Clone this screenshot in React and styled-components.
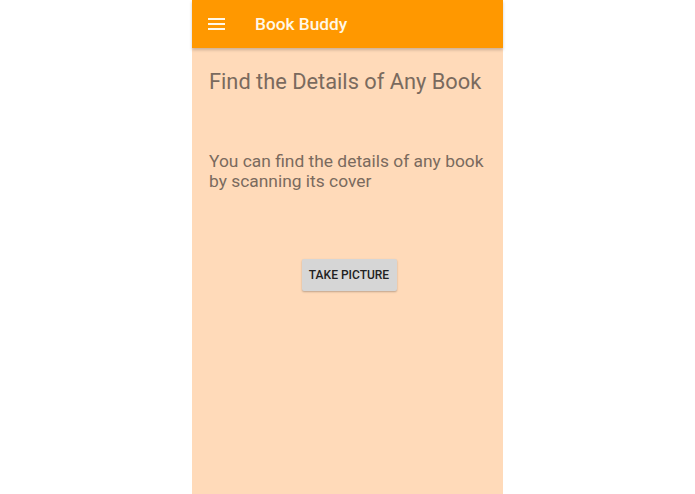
import React from "react";
import styled, { createGlobalStyle } from "styled-components";

const Global = createGlobalStyle`
  html, body { margin: 0; padding: 0; background: #ffffff; }
  body { font-family: Roboto, "Noto Sans", Arial, sans-serif; }
`;

const Page = styled.div`
  display: flex;
  justify-content: center;
  width: 695px;
  height: 494px;
`;

const Phone = styled.div`
  width: 311px;
  height: 494px;
  background: #ffdab9;
  display: flex;
  flex-direction: column;
`;

const AppBar = styled.header`
  height: 48px;
  background: #ff9800;
  display: flex;
  align-items: center;
  box-shadow: 0 2px 3px rgba(0, 0, 0, 0.2);
  position: relative;
  z-index: 1;
`;

const MenuButton = styled.div`
  width: 63px;
  padding-left: 16px;
  box-sizing: border-box;
  display: flex;
  align-items: center;
`;

const Title = styled.div`
  color: #fff8e8;
  font-size: 17.3px;
  font-weight: 500;
`;

const Content = styled.main`
  display: flex;
  flex-direction: column;
  padding: 21px 17px 0 17px;
`;

const Heading = styled.h1`
  margin: 0;
  font-size: 21.8px;
  font-weight: 400;
  color: #7a6a5e;
  line-height: 26px;
`;

const Paragraph = styled.p`
  margin: 56px 0 0 0;
  font-size: 17.4px;
  line-height: 20px;
  color: #7a6a5e;
`;

const ButtonRow = styled.div`
  display: flex;
  justify-content: center;
  margin-top: 68px;
  padding-left: 3px;
`;

const Button = styled.button`
  width: 95px;
  height: 32px;
  border: none;
  border-radius: 2px;
  background: #d6d6d6;
  color: #222222;
  font-family: Roboto, Arial, sans-serif;
  font-size: 12px;
  font-weight: 500;
  padding: 0;
  box-shadow: 0 1px 2px rgba(0, 0, 0, 0.25);
`;

export default function App() {
  return (
    <>
      <Global />
      <Page>
        <Phone>
          <AppBar>
            <MenuButton>
              <svg width="17" height="14" viewBox="0 0 17 14">
                <rect x="0" y="1" width="17" height="2" fill="#fff8e8" />
                <rect x="0" y="6" width="17" height="2" fill="#fff8e8" />
                <rect x="0" y="11" width="17" height="2" fill="#fff8e8" />
              </svg>
            </MenuButton>
            <Title>Book Buddy</Title>
          </AppBar>
          <Content>
            <Heading>Find the Details of Any Book</Heading>
            <Paragraph>
              You can find the details of any book by scanning its cover
            </Paragraph>
            <ButtonRow>
              <Button>TAKE PICTURE</Button>
            </ButtonRow>
          </Content>
        </Phone>
      </Page>
    </>
  );
}
